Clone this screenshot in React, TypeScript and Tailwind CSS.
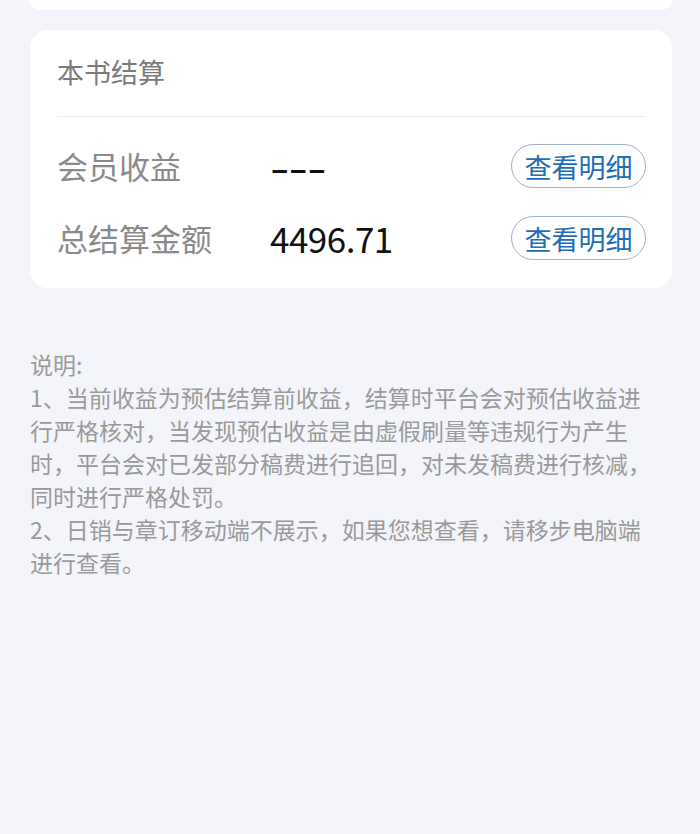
import React from "react";

const rows = [
  { label: "会员收益", value: "---" },
  { label: "总结算金额", value: "4496.71" },
];

const notes = [
  "1、当前收益为预估结算前收益，结算时平台会对预估收益进行严格核对，当发现预估收益是由虚假刷量等违规行为产生时，平台会对已发部分稿费进行追回，对未发稿费进行核减，同时进行严格处罚。",
  "2、日销与章订移动端不展示，如果您想查看，请移步电脑端进行查看。",
];

export default function App() {
  return (
    <div
      className="min-h-[834px] bg-[#f4f5fa] pl-[30px] pr-[28px]"
      style={{ fontFamily: '"Noto Sans CJK SC", "Noto Sans", sans-serif' }}
    >
      {/* tail of the card above */}
      <div className="h-[10px] rounded-b-[16px] bg-white" />

      <div className="mt-[20px] rounded-[18px] bg-white pb-[28px] pl-[27px] pr-[26px] pt-[24px]">
        <div className="text-[27px] leading-[36px] text-[#7a7a7a]">本书结算</div>
        <div className="mt-[26px] h-px bg-[#ececef]" />
        <div className="mt-[27px] flex flex-col gap-[28px]">
          {rows.map((r) => (
            <div key={r.label} className="flex h-[44px] items-center">
              <div className="w-[213px] text-[31px] leading-[40px] text-[#8a8a8a]">{r.label}</div>
              <div className="flex-1 text-[35px] leading-[40px] tracking-[-0.5px] text-[#111]">
                {r.value === "---" ? (
                  <span className="inline-block origin-left scale-x-[1.55] font-medium">{r.value}</span>
                ) : (
                  r.value
                )}
              </div>
              <button className="flex h-[44px] w-[135px] items-center justify-center rounded-full border border-[#9fb3c6] text-[27px] leading-none text-[#1e6db6]">
                查看明细
              </button>
            </div>
          ))}
        </div>
      </div>

      <div className="mt-[60px] w-[630px] text-[23px] leading-[33px] text-[#9a9a9a]">
        <div>说明:</div>
        {notes.map((n) => (
          <div key={n}>{n}</div>
        ))}
      </div>
    </div>
  );
}
